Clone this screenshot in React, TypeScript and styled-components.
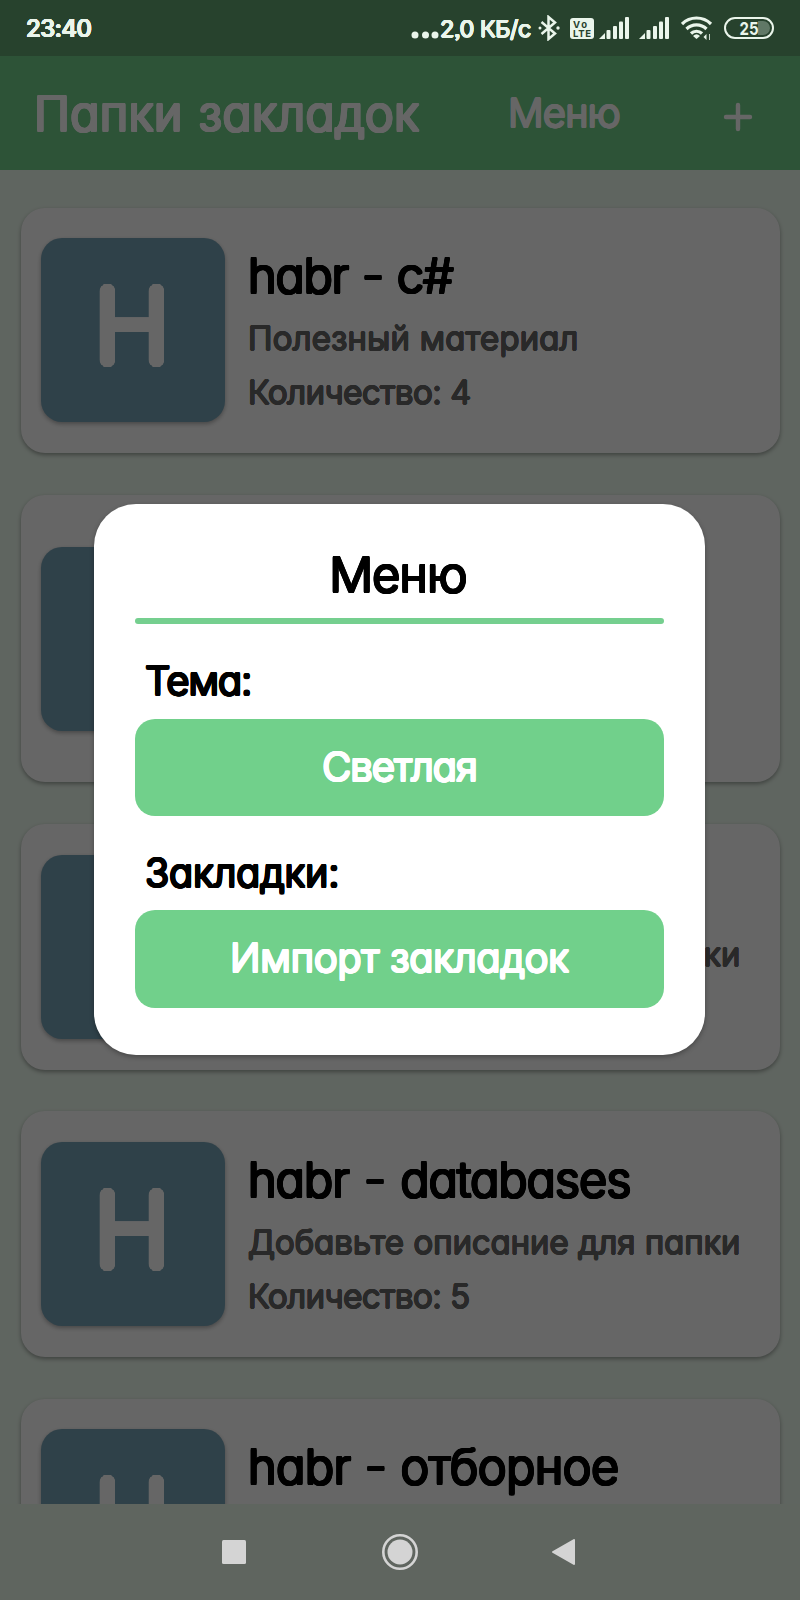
import React from 'react';
import styled, { createGlobalStyle } from 'styled-components';

const GlobalStyle = createGlobalStyle`
  * { box-sizing: border-box; }
  body { margin: 0; background: #eefcf0; }
`;

/* A ring of solid copies of the glyphs: thickens them and rounds their ends. */
const ring = (radius: number, steps: number) =>
  Array.from({ length: steps }, (_, i) => {
    const a = (i / steps) * Math.PI * 2;
    return `${(Math.cos(a) * radius).toFixed(2)}px ${(Math.sin(a) * radius).toFixed(2)}px 0 currentColor`;
  }).join(', ');

type TypeProps = { $size: number; $tracking?: number; $words?: number; $weight?: number; $round?: number };

const Label = styled.span<TypeProps>`
  display: block;
  white-space: pre;
  font-family: Inter, 'Liberation Sans', sans-serif;
  font-feature-settings: 'cv11', 'ss03';
  font-size: ${p => p.$size}px;
  font-weight: ${p => p.$weight ?? 300};
  letter-spacing: ${p => p.$tracking ?? 0}px;
  word-spacing: ${p => p.$words ?? 0}px;
  text-shadow: ${p => ring(p.$round ?? 1, (p.$round ?? 1) > 3 ? 40 : 12)};
`;

const Screen = styled.div`
  position: relative;
  display: flex;
  flex-direction: column;
  width: 800px;
  height: 1600px;
  overflow: hidden;
  background: #eefcf0;
  color: #000;
`;

const StatusBar = styled.div`
  position: relative;
  z-index: 2;
  flex: none;
  display: flex;
  align-items: center;
  justify-content: space-between;
  height: 56px;
  padding: 0 26px;
  background: #27422d;
  color: #eaf5eb;
`;

const StatusIcons = styled.div`
  display: flex;
  align-items: center;
  height: 56px;
`;

const Speed = styled.div`
  width: 98px;
`;

const Icon = styled.svg<{ $gap?: number }>`
  display: block;
  flex: none;
  margin-left: ${p => p.$gap ?? 0}px;
`;

const Header = styled.header`
  flex: none;
  display: flex;
  align-items: center;
  height: 114px;
  padding: 0 47px 0 34px;
  background: #71d08b;
  color: #fff;
`;

const HeaderTitle = styled.div`
  width: 474px;
`;

const HeaderMenu = styled.div`
  flex: 1;
`;

const AddButton = styled.div`
  padding-top: 8px;
`;

const List = styled.main`
  flex: 1;
  display: flex;
  flex-direction: column;
  gap: 41.6px;
  min-height: 0;
  overflow: hidden;
  padding: 37.6px 20px 0 21px;
`;

const Card = styled.article<{ $height: number }>`
  flex: none;
  display: flex;
  align-items: center;
  gap: 23px;
  height: ${p => p.$height}px;
  padding-left: 20px;
  border-radius: 24px;
  background: #fff;
  box-shadow: 0 2px 4px rgba(0, 0, 0, 0.35);
`;

const Tile = styled.div`
  flex: none;
  display: flex;
  align-items: center;
  justify-content: center;
  width: 184px;
  height: 184px;
  padding: 0 3px 9px 0;
  border-radius: 21px;
  background: #76a3b7;
  color: #fff;
  box-shadow: 0 2px 4px rgba(0, 0, 0, 0.3);
`;

const Initial = styled(Label)`
  transform: scaleX(1.03);
`;

const CardText = styled.div`
  display: flex;
  flex-direction: column;
  padding-bottom: 1px;
`;

const CardTitle = styled(Label)`
  height: 70px;
  line-height: 70px;
`;

const CardLine = styled(Label)`
  height: 54px;
  line-height: 54px;
  color: #666;
`;

const NavBar = styled.nav`
  position: relative;
  z-index: 2;
  flex: none;
  display: flex;
  align-items: center;
  height: 96px;
  padding-left: 222px;
  background: #5f655f;
`;

const Overlay = styled.div`
  position: absolute;
  inset: 0;
  z-index: 1;
  display: flex;
  align-items: flex-start;
  padding: 504px 0 0 94px;
  background: rgba(0, 0, 0, 0.6);
`;

const Dialog = styled.section`
  display: flex;
  flex-direction: column;
  width: 611px;
  height: 551px;
  padding: 41px 41px 0;
  border-radius: 42px;
  background: #fff;
  box-shadow: 0 2px 5px rgba(0, 0, 0, 0.3);
`;

const DialogTitle = styled.h1`
  display: flex;
  justify-content: center;
  height: 73px;
  margin: 0;
  padding-right: 3px;
  line-height: 60px;
  font-weight: 400;
`;

const Divider = styled.div`
  flex: none;
  height: 6px;
  border-radius: 3px;
  background: #75cf8f;
`;

const Section = styled.div<{ $top: number; $height: number }>`
  margin-top: ${p => p.$top}px;
  height: ${p => p.$height}px;
  padding-left: 10px;
  line-height: 60px;
`;

const Button = styled.button<{ $height: number }>`
  flex: none;
  display: flex;
  align-items: center;
  justify-content: center;
  height: ${p => p.$height}px;
  padding: 0 0 3px;
  border: 0;
  border-radius: 20px;
  background: #71d08b;
  color: #fff;
`;

function Signal({ gap }: { gap: number }) {
  return (
    <Icon $gap={gap} width="30" height="22" viewBox="0 0 30 22" fill="#eaf5eb">
      <path d="M0 22 L6 16 V22Z" />
      <rect x="7.500" y="13" width="4" height="9" rx="1" />
      <rect x="14" y="9" width="4" height="13" rx="1" />
      <rect x="20" y="4.500" width="4" height="17.500" rx="1" />
      <rect x="26" y="0" width="4" height="22" rx="1" />
    </Icon>
  );
}

interface Folder {
  title: string;
  tracking: number;
  words: number;
  note: string;
  noteTracking: number;
  count: string;
  height: number;
}

const folders: Folder[] = [
  { title: 'habr - c#', tracking: -1.1, words: 1.5, note: 'Полезный материал', noteTracking: 0.35, count: 'Количество: 4', height: 245.7 },
  { title: '', tracking: 0, words: 0, note: '', noteTracking: 0, count: '', height: 287.5 },
  { title: '', tracking: 0, words: 0, note: 'Добавьте описание для папки', noteTracking: 0.15, count: '', height: 245.7 },
  { title: 'habr - databases', tracking: -0.9, words: 2.5, note: 'Добавьте описание для папки', noteTracking: 0.15, count: 'Количество: 5', height: 245.7 },
  { title: 'habr - отборное', tracking: -0.45, words: 1, note: '', noteTracking: 0, count: '', height: 245.7 },
];

export default function App() {
  return (
    <>
      <GlobalStyle />
      <Screen>
        <StatusBar>
          <Label $size={24} $weight={500} $round={0.4} $tracking={-0.6}>23:40</Label>
          <StatusIcons>
            <Icon width="29" height="22" viewBox="0 0 29 22" fill="#eaf5eb">
              <circle cx="4" cy="18" r="3.500" />
              <circle cx="14.500" cy="18" r="3.500" />
              <circle cx="24" cy="18" r="3.500" />
            </Icon>
            <Speed>
              <Label $size={23.5} $weight={400} $round={0.5} $tracking={-0.5}>2,0 КБ/с</Label>
            </Speed>
            <Icon width="22" height="26" viewBox="0 0 22 26" fill="none" stroke="#eaf5eb" strokeWidth="2.500">
              <path d="M3.500 7 L17 18.500 L10.500 24 V2 L17 7.500 L3.500 19" />
              <circle cx="2" cy="13" r="1.500" fill="#eaf5eb" stroke="none" />
              <circle cx="20" cy="13" r="1.700" fill="#eaf5eb" stroke="none" />
            </Icon>
            <Icon $gap={10} width="24" height="21" viewBox="0 0 24 21">
              <rect width="24" height="21" rx="3" fill="#eaf5eb" />
              <text x="3" y="9.500" fontFamily="Inter" fontSize="9.500" fontWeight="700" fill="#27422d" textLength="14">Vo</text>
              <text x="3" y="18.800" fontFamily="Inter" fontSize="9.500" fontWeight="700" fill="#27422d" textLength="18">LTE</text>
            </Icon>
            <Signal gap={5} />
            <Signal gap={10} />
            <Icon $gap={12} width="32" height="24" viewBox="0 0 32 24" fill="none" stroke="#eaf5eb" strokeWidth="3.200">
              <path d="M1 8 C9 0 22 0 30 8" />
              <path d="M5.500 13 C11 7.500 20 7.500 25.500 13" />
              <path d="M10 17.500 C13 14.500 18 14.500 21 17.500" />
              <path d="M12 20 Q15.500 16.500 19 20 L15.500 23Z" fill="#eaf5eb" stroke="none" />
              <path d="M25.500 18 V24 L22.500 21Z" fill="#eaf5eb" stroke="none" />
              <path d="M28.500 18 V24" strokeWidth="0.800" />
            </Icon>
            <Icon $gap={11} width="50" height="22" viewBox="0 0 50 22">
              <rect x="1" y="1" width="48" height="20" rx="10" fill="none" stroke="#eaf5eb" strokeWidth="2" />
              <path d="M34 4 H39 A7 7 0 0 1 39 18 H34Z" fill="#607866" />
              <text x="15.500" y="17.500" fontFamily="Inter" fontSize="18" fontWeight="700" fill="#eaf5eb" textLength="19" lengthAdjust="spacingAndGlyphs">25</text>
            </Icon>
          </StatusIcons>
        </StatusBar>

        <Header>
          <HeaderTitle>
            <Label $size={48.5} $round={1.4} $tracking={0.35} $words={2}>Папки закладок</Label>
          </HeaderTitle>
          <HeaderMenu>
            <Label $size={39.5} $tracking={-0.6}>Меню</Label>
          </HeaderMenu>
          <AddButton>
            <Icon width="30" height="30" viewBox="0 0 30 30" stroke="#fff" strokeWidth="4.400" strokeLinecap="round">
              <path d="M3 15 H27 M15 3 V27" />
            </Icon>
          </AddButton>
        </Header>

        <List>
          {folders.map((f, i) => (
            <Card key={i} $height={f.height}>
              <Tile>
                <Initial $size={98} $weight={100} $round={6.2}>H</Initial>
              </Tile>
              <CardText>
                <CardTitle $size={48.5} $tracking={f.tracking} $words={f.words} $round={1.3}>{f.title}</CardTitle>
                <CardLine $size={33} $tracking={f.noteTracking} $round={0.9}>{f.note}</CardLine>
                <CardLine $size={33} $tracking={-0.3} $round={0.9}>{f.count}</CardLine>
              </CardText>
            </Card>
          ))}
        </List>

        <NavBar>
          <Icon width="24" height="24" viewBox="0 0 24 24">
            <rect width="24" height="24" rx="1.500" fill="#d4d4d4" />
          </Icon>
          <Icon $gap={136} width="36" height="36" viewBox="0 0 36 36">
            <circle cx="18" cy="18" r="16.700" fill="none" stroke="#d4d4d4" strokeWidth="2.600" />
            <circle cx="18" cy="18" r="12.500" fill="#d4d4d4" />
          </Icon>
          <Icon $gap={134} width="23" height="26" viewBox="0 0 23 26">
            <path d="M22 1 V25 L1 13Z" fill="#d4d4d4" stroke="#d4d4d4" strokeWidth="2" strokeLinejoin="round" />
          </Icon>
        </NavBar>

        <Overlay>
          <Dialog>
            <DialogTitle>
              <Label $size={48.5} $round={1.3} $tracking={-0.8}>Меню</Label>
            </DialogTitle>
            <Divider />
            <Section $top={27} $height={68}>
              <Label $size={40} $tracking={-1} $round={1.15}>Тема:</Label>
            </Section>
            <Button $height={97}>
              <Label $size={40} $tracking={-0.9} $round={1.15}>Светлая</Label>
            </Button>
            <Section $top={27} $height={67}>
              <Label $size={40} $tracking={-0.15} $round={1.15}>Закладки:</Label>
            </Section>
            <Button $height={98}>
              <Label $size={40} $tracking={-0.15} $round={1.15}>Импорт закладок</Label>
            </Button>
          </Dialog>
        </Overlay>
      </Screen>
    </>
  );
}
